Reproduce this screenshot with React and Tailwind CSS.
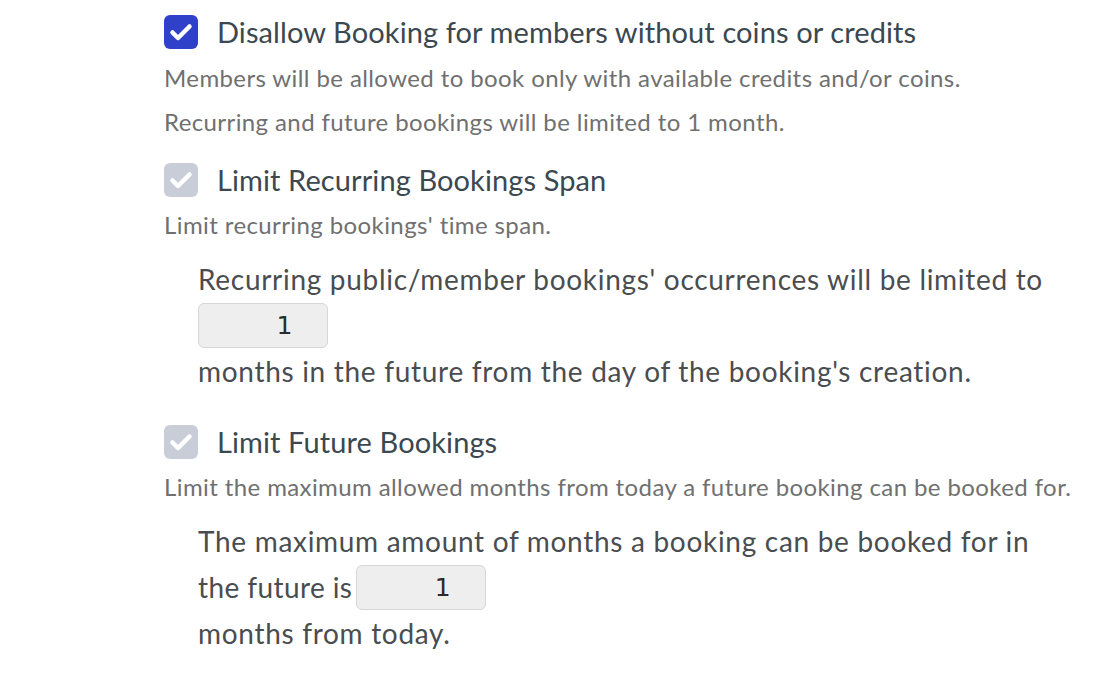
import React from 'react';

const Check = ({ disabled }) => (
  <div
    className={`w-[34px] h-[34px] rounded-[6px] flex items-center justify-center shrink-0 ${
      disabled ? 'bg-[#c9cdd8]' : 'bg-[#2f41c9]'
    }`}
  >
    <svg width="26" height="26" viewBox="0 0 26 26" fill="none">
      <path d="M4.5 13.5l5.5 5.5L21.5 7.5" stroke="white" strokeWidth="4.5" strokeLinecap="round" strokeLinejoin="round" />
    </svg>
  </div>
);

const NumberBox = () => (
  <span className="inline-flex w-[130px] h-[45px] items-center justify-end pr-[34px] rounded-[6px] bg-[#eeeeee] border border-[#d6d6d6] text-[25px] leading-none text-[#2a2a2a] font-['DejaVu_Sans',sans-serif] align-middle">
    1
  </span>
);

const Option = ({ label, disabled }) => (
  <div className="flex items-center gap-[19px] h-[34px]">
    <Check disabled={disabled} />
    <span className="text-[29px] tracking-[0.1px] leading-[34px] text-[#3b4850]">{label}</span>
  </div>
);

const Desc = ({ children, className = '' }) => (
  <p className={`text-[24px] tracking-[0.4px] leading-[44px] text-[#707070] ${className}`}>{children}</p>
);

export default function App() {
  return (
    <div className="min-h-screen bg-white font-['Lato',sans-serif] pl-[164px] pt-[15px]">
      <Option label="Disallow Booking for members without coins or credits" />
      <Desc className="mt-[7px]">
        Members will be allowed to book only with available credits and/or coins.
      </Desc>
      <Desc>Recurring and future bookings will be limited to 1 month.</Desc>

      <div className="mt-[19px]">
        <Option label="Limit Recurring Bookings Span" disabled />
      </div>
      <Desc className="mt-[6px]">Limit recurring bookings' time span.</Desc>
      <div className="pl-[34px] mt-[9px] text-[28px] tracking-[0.7px] leading-[46px] text-[#4a4d50]">
        <div>Recurring public/member bookings' occurrences will be limited to</div>
        <div className="h-[46px] flex items-end">
          <NumberBox />
        </div>
        <div>months in the future from the day of the booking's creation.</div>
      </div>

      <div className="mt-[31px]">
        <Option label="Limit Future Bookings" disabled />
      </div>
      <Desc className="mt-[6px]">
        Limit the maximum allowed months from today a future booking can be booked for.
      </Desc>
      <div className="pl-[34px] mt-[9px] text-[28px] tracking-[0.7px] leading-[46px] text-[#4a4d50]">
        <div>The maximum amount of months a booking can be booked for in</div>
        <div className="flex items-center gap-[4px] h-[46px]">
          <span className="tracking-[0.4px]">the future is</span>
          <NumberBox />
        </div>
        <div>months from today.</div>
      </div>
    </div>
  );
}
